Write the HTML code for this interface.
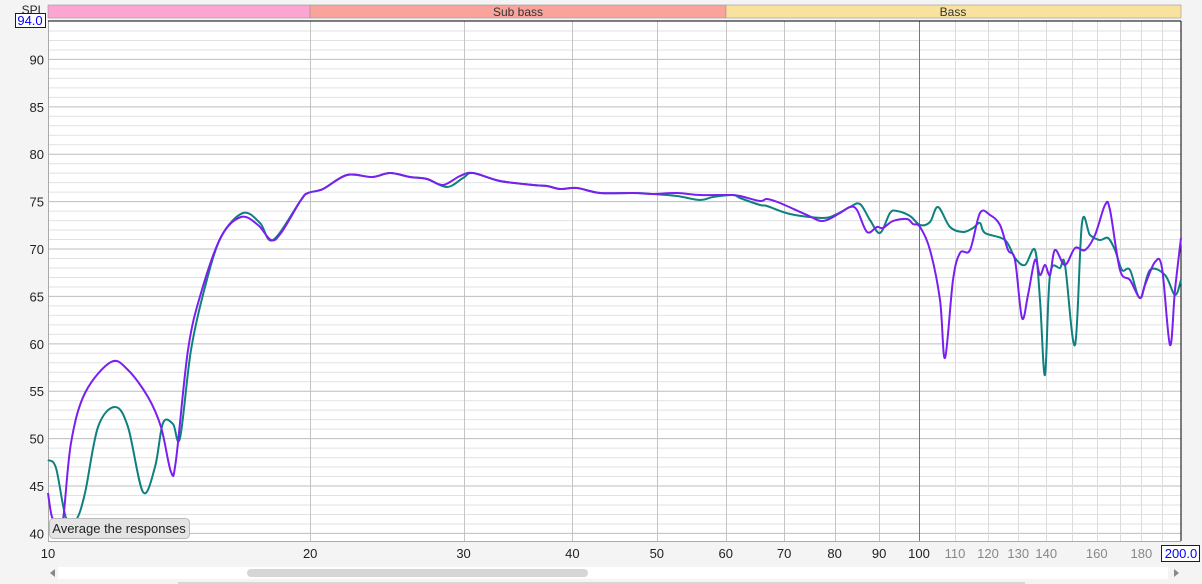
<!DOCTYPE html>
<html><head><style>
html,body{margin:0;padding:0;background:#f4f4f4;width:1202px;height:584px;overflow:hidden;font-family:"Liberation Sans",sans-serif}
</style></head><body>
<svg width="1202" height="584" xmlns="http://www.w3.org/2000/svg" font-family="Liberation Sans, sans-serif">
<rect x="0" y="0" width="1202" height="584" fill="#f4f4f4"/>
<rect x="48" y="21" width="1133" height="520" fill="#fff"/>
<g id="grid"></g>
<rect x="48" y="5" width="262" height="13" fill="#fca5d2" stroke="#999" stroke-width="0.6"/>
<rect x="310" y="5" width="416" height="13" fill="#f9a39b" stroke="#999" stroke-width="0.6"/>
<rect x="726" y="5" width="455" height="13" fill="#f8e29d" stroke="#999" stroke-width="0.6"/>
<text x="518" y="16" font-size="12" text-anchor="middle" fill="#333">Sub bass</text>
<text x="953" y="16" font-size="12" text-anchor="middle" fill="#333">Bass</text>
<line x1="48" y1="21" x2="1181" y2="21" stroke="#000" stroke-width="1"/>
<line x1="1181" y1="21" x2="1181" y2="541" stroke="#000" stroke-width="1"/>
<text x="33" y="14" font-size="12" text-anchor="middle" fill="#222">SPL</text>
<rect x="15.5" y="13.5" width="30" height="14" fill="#fff" stroke="#00f"/>
<text x="30" y="25" font-size="13" text-anchor="middle" fill="#00f">94.0</text>
<g id="curves"></g>
<g id="labels" font-size="13" fill="#222"></g>
<rect x="49.5" y="518.5" width="140" height="20" rx="4" fill="#e4e4e4" stroke="#bbb"/>
<text x="119" y="533" font-size="13" text-anchor="middle" fill="#222">Average the responses</text>
<rect x="1161.5" y="545.5" width="38" height="16" fill="#fff" stroke="#00f"/>
<text x="1181" y="558" font-size="13" text-anchor="middle" fill="#00f">200.0</text>
<rect x="58" y="567" width="1110" height="12" fill="#fff"/>
<rect x="247" y="569" width="341" height="8" rx="4" fill="#d6d6d6"/>
<polygon points="50,573 55,569 55,577" fill="#888"/>
<polygon points="1174,569 1179,573 1174,577" fill="#888"/>
<line x1="178" y1="583" x2="1025" y2="583" stroke="#ccc" stroke-width="1.5"/>
</svg>
<script>
const ns="http://www.w3.org/2000/svg";
const g=document.getElementById('grid'),L=document.getElementById('labels'),C=document.getElementById('curves');
function el(p,t,a,txt){const e=document.createElementNS(ns,t);for(const k in a)e.setAttribute(k,a[k]);if(txt)e.textContent=txt;p.appendChild(e);return e;}
const Y=d=>21+(94-d)*9.48, X=f=>48+871*Math.log10(f/10);
for(let d=40;d<=93;d++){const y=Y(d)+0.5;el(g,'line',{x1:48,x2:1181,y1:y,y2:y,stroke:d%5?'#e2e2e2':'#bdbdbd','stroke-width':1});
 if(d%5==0)el(L,'text',{x:44,y:y+5,'text-anchor':'end'},String(d));}
[20,30,40,50,60,70,80,90,100,110,120,130,140,150,160,170,180,190].forEach(f=>{const x=Math.round(X(f))+0.5;el(g,'line',{x1:x,x2:x,y1:21,y2:541,stroke:f==100?'#777':(f>100?'#dcdcdc':'#c4c4c4'),'stroke-width':1});});
[10,20,30,40,50,60,70,80,90,100].forEach(f=>el(L,'text',{x:X(f),y:558,'text-anchor':'middle'},String(f)));
[110,120,130,140,160,180].forEach(f=>el(L,'text',{x:X(f),y:558,'text-anchor':'middle',fill:'#888'},String(f)));
el(g,'line',{x1:48,x2:1181,y1:541.5,y2:541.5,stroke:'#aaa'});
el(g,'line',{x1:48.5,x2:48.5,y1:21,y2:541,stroke:'#aaa'});
function path(s){const p=s.trim().split(/\s+/).map(q=>q.split(',').map(Number));let d='M'+p[0];
 for(let i=0;i<p.length-1;i++){const a=p[i-1]||p[i],b=p[i],c=p[i+1],e=p[i+2]||c;
  d+=' C'+(b[0]+(c[0]-a[0])/6)+','+(b[1]+(c[1]-a[1])/6)+' '+(c[0]-(e[0]-b[0])/6)+','+(c[1]-(e[1]-b[1])/6)+' '+c[0]+','+c[1];}
 return d;}
const teal="48,460 56,468 66,518 76,520 85,493 98,427 115,407 128,427 143,492 155,467 163,423 173,424 180,438 191,350 205,287 221,237 243,213 260,223 273,240 301,200 308,193 323,189 347,175 372,177 390,173 410,177 427,179 447,187 463,178 473,173 500,181 533,185 547,186 560,189 577,188 600,193 633,193 653,194 677,196 700,200 713,197 733,195 740,198 760,205 767,206 790,214 823,218 837,214 850,207 860,204 870,220 880,233 890,213 897,211 910,216 920,225 930,222 938,207 950,227 963,232 973,228 980,223 985,233 1005,240 1015,258 1025,265 1035,250 1040,300 1045,375 1050,275 1060,268 1065,265 1075,345 1082,223 1090,235 1100,240 1108,238 1115,250 1122,270 1130,270 1140,298 1150,270 1165,275 1175,295 1181,280";
const purple="48,493 52,517 58,522 63,520 71,443 85,393 111,362 128,370 148,397 161,427 171,472 176,460 188,350 201,293 221,237 241,217 258,225 271,240 281,233 301,200 308,193 323,189 347,175 372,177 390,173 410,177 427,179 443,185 460,176 473,173 500,181 533,185 547,186 560,189 577,188 600,193 633,193 653,194 677,193 700,195 730,195 740,196 760,201 767,199 780,203 807,215 823,221 840,213 850,207 857,210 867,232 877,227 883,228 893,221 907,219 913,224 920,227 930,250 940,300 945,358 953,280 960,253 970,250 980,213 990,215 1000,225 1008,250 1015,260 1022,318 1028,295 1035,260 1040,275 1045,265 1050,275 1055,250 1065,265 1075,248 1085,250 1095,235 1105,205 1110,210 1120,270 1130,280 1140,298 1145,285 1155,262 1162,268 1170,345 1175,290 1181,238";
el(C,'path',{d:path(teal),fill:'none',stroke:'#0f8080','stroke-width':2,'stroke-linejoin':'round'});
el(C,'path',{d:path(purple),fill:'none',stroke:'#7a1ff0','stroke-width':2,'stroke-linejoin':'round'});
</script>
</body></html>
